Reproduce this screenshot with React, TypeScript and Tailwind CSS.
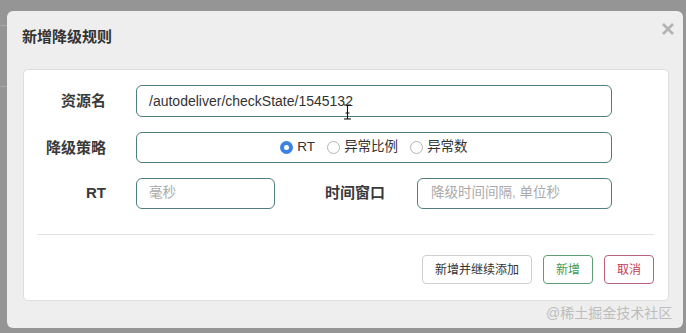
import React from "react";

const font = { fontFamily: '"Liberation Sans", "Noto Sans CJK SC", sans-serif' };

function Radio({ checked, label }: { checked?: boolean; label: string }) {
  return (
    <div className="flex items-center gap-[4px]">
      {checked ? (
        <span className="w-[13px] h-[13px] rounded-full bg-[#3a82e4] flex items-center justify-center">
          <span className="w-[5px] h-[5px] rounded-full bg-white" />
        </span>
      ) : (
        <span className="w-[13px] h-[13px] rounded-full border border-[#b5b5b5] bg-white" />
      )}
      <span className="text-[13.5px] text-[#333]">{label}</span>
    </div>
  );
}

export default function App() {
  return (
    <div
      className="relative w-[686px] h-[333px] bg-[#959595] pt-[11px] pl-[7px] pr-[3px] overflow-hidden"
      style={font}
    >
      <div className="absolute left-0 top-[25px] w-[7px] h-px bg-[#a8a8a8]" />
      <div className="absolute left-0 top-[86px] w-[7px] h-px bg-[#a8a8a8]" />
      <div className="w-[676px] h-[317px] bg-[#eeeeee] rounded-[6px] flex flex-col">
        <div className="h-[58px] flex items-start justify-between pl-[15px] pr-[8px]">
          <div className="mt-[15px] text-[15px] font-bold text-[#333]">新增降级规则</div>
          <svg width="14" height="14" viewBox="0 0 14 14" className="mt-[11px]">
            <path d="M2 2 L12 12 M12 2 L2 12" stroke="#b3b3b3" strokeWidth="2.6" strokeLinecap="butt" />
          </svg>
        </div>
        <div className="ml-[16px] w-[646px] h-[232px] bg-white rounded-[5px] border border-[#dedede] flex flex-col pt-[15px]">
          <div className="flex items-center h-[32px]">
            <div className="w-[82px] text-right text-[15px] font-bold text-[#3a3a3a]">资源名</div>
            <div className="ml-[30px] w-[476px] h-[32px] border border-[#4e7e7f] rounded-[6px] flex items-center pl-[12px] text-[14px] text-[#333]">
              /autodeliver/checkState/1545132
            </div>
          </div>
          <div className="flex items-center h-[31px] mt-[15px]">
            <div className="w-[82px] text-right text-[15px] font-bold text-[#3a3a3a] pt-[2px]">降级策略</div>
            <div className="ml-[30px] w-[476px] h-[31px] border border-[#4e7e7f] rounded-[6px] flex items-center justify-center gap-[12px]">
              <Radio checked label="RT" />
              <Radio label="异常比例" />
              <Radio label="异常数" />
            </div>
          </div>
          <div className="flex items-center h-[31px] mt-[15px]">
            <div className="w-[82px] text-right text-[15px] font-bold text-[#3a3a3a]">RT</div>
            <div className="ml-[30px] w-[139px] h-[31px] border border-[#4e7e7f] rounded-[6px] flex items-center pl-[12px] text-[13.5px] text-[#aaa]">
              毫秒
            </div>
            <div className="w-[110px] text-right text-[15px] font-bold text-[#3a3a3a]">时间窗口</div>
            <div className="ml-[32px] w-[195px] h-[31px] border border-[#4e7e7f] rounded-[6px] flex items-center pl-[13px] text-[13.5px] text-[#aaa]">
              降级时间间隔, 单位秒
            </div>
          </div>
          <div className="ml-[13px] w-[617px] h-px bg-[#e2e2e2] mt-[25px]" />
          <div className="flex justify-end gap-[11px] pr-[14px] mt-[20px]">
            <div className="h-[29px] px-[12px] flex items-center border border-[#cfcfcf] rounded-[4px] text-[12px] text-[#333]">
              新增并继续添加
            </div>
            <div className="h-[29px] px-[12px] flex items-center border border-[#5f9e74] rounded-[4px] text-[12px] text-[#3f9a55]">
              新增
            </div>
            <div className="h-[29px] px-[12px] flex items-center border border-[#b9627a] rounded-[4px] text-[12px] text-[#c23a55]">
              取消
            </div>
          </div>
        </div>
      </div>
      <div className="absolute left-[546px] top-[303px] text-[14px] text-[#bdbdbd]">@稀土掘金技术社区</div>
      <svg className="absolute left-[343px] top-[104px]" width="9" height="16" viewBox="0 0 9 16">
        <path d="M1 1 H3.5 Q4.5 1 4.5 2 V14 Q4.5 15 3.5 15 H1 M8 1 H5.5 Q4.5 1 4.5 2 M4.5 14 Q4.5 15 5.5 15 H8 M2.5 9 H6.5" stroke="#111" strokeWidth="1.1" fill="none" />
      </svg>
    </div>
  );
}
